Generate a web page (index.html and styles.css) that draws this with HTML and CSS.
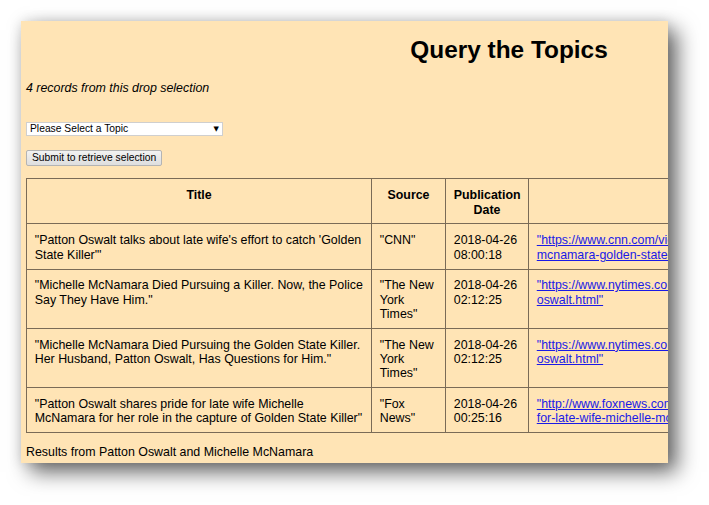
FILE: index.html
```html
<!DOCTYPE html>
<html lang="en">
<head>
<meta charset="utf-8">
<title>Query the Topics</title>
<link rel="stylesheet" href="styles.css">
</head>
<body>
<div class="shot">
  <div class="page">
    <h2 class="title">Query the Topics</h2>
    <p class="count">4 records from this drop selection</p>
    <div class="select-wrap">
      <select class="topic-select">
        <option>Please Select a Topic</option>
      </select>
      <span class="select-arrow">&#9660;</span>
    </div>
    <button class="submit" type="button">Submit to retrieve selection</button>
    <table class="results">
      <colgroup>
        <col class="c-title">
        <col class="c-source">
        <col class="c-date">
        <col class="c-url">
      </colgroup>
      <thead>
        <tr>
          <th>Title</th>
          <th>Source</th>
          <th>Publication Date</th>
          <th></th>
        </tr>
      </thead>
      <tbody>
        <tr>
          <td>"Patton Oswalt talks about late wife's effort to catch 'Golden State Killer'"</td>
          <td>"CNN"</td>
          <td>2018-04-26 08:00:18</td>
          <td><a href="#">"https://www.cnn.com/videos/entertainment/2018/04/26/patton-oswalt-michelle-<br>mcnamara-golden-state-killer-orig.cnn"</a></td>
        </tr>
        <tr>
          <td>"Michelle McNamara Died Pursuing a Killer. Now, the Police Say They Have Him."</td>
          <td>"The New York Times"</td>
          <td>2018-04-26 02:12:25</td>
          <td><a href="#">"https://www.nytimes.com/2018/04/26/us/golden-state-killer-michelle-mcnamara-patton-<br>oswalt.html"</a></td>
        </tr>
        <tr>
          <td>"Michelle McNamara Died Pursuing the Golden State Killer. Her Husband, Patton Oswalt, Has Questions for Him."</td>
          <td>"The New York Times"</td>
          <td>2018-04-26 02:12:25</td>
          <td><a href="#">"https://www.nytimes.com/2018/04/26/arts/patton-oswalt-michelle-mcnamara-patton-<br>oswalt.html"</a></td>
        </tr>
        <tr>
          <td>"Patton Oswalt shares pride for late wife Michelle McNamara for her role in the capture of Golden State Killer"</td>
          <td>"Fox News"</td>
          <td>2018-04-26 00:25:16</td>
          <td><a href="#">"http://www.foxnews.com/entertainment/2018/04/26/patton-oswalt-shares-pride-<br>for-late-wife-michelle-mcnamara.html"</a></td>
        </tr>
      </tbody>
    </table>
    <p class="footer-note">Results from Patton Oswalt and Michelle McNamara</p>
  </div>
</div>
</body>
</html>
```

FILE: styles.css
```css
html, body {
  margin: 0;
  padding: 0;
  background: #ffffff;
}

body {
  width: 709px;
  height: 505px;
  overflow: hidden;
}

.shot {
  margin: 21px 0 0 21px;
  width: 647px;
  height: 442px;
  background: #ffe4b5;
  overflow: hidden;
  box-shadow: 9px 9px 20px rgba(0, 0, 0, 0.6), 0 0 12px rgba(0, 0, 0, 0.12);
}

.page {
  width: 966px;
  padding: 0 5px;
  display: flex;
  flex-direction: column;
  align-items: flex-start;
  font-family: "Liberation Sans", Arial, sans-serif;
  font-size: 12.4px;
  color: #000;
}

.title {
  align-self: stretch;
  margin: 15px 0 0;
  text-align: center;
  font-size: 24.4px;
  font-weight: bold;
}

.count {
  margin: 16.9px 0 0;
  font-style: italic;
}

.select-wrap {
  position: relative;
  margin-top: 26.7px;
  display: flex;
}

.topic-select {
  appearance: none;
  -webkit-appearance: none;
  width: 197px;
  height: 14px;
  margin: 0;
  padding: 0 0 0 3px;
  border: 1px solid #cfcfcf;
  border-radius: 0;
  background: #ffffff;
  font-family: "Liberation Sans", Arial, sans-serif;
  font-size: 10.3px;
  line-height: 12px;
  color: #000;
  box-sizing: border-box;
}

.select-arrow {
  position: absolute;
  right: 4px;
  top: 3px;
  font-family: "DejaVu Sans", sans-serif;
  font-size: 7px;
  line-height: 8px;
  color: #000;
  pointer-events: none;
}

.submit {
  margin: 14px 0 0;
  height: 16.6px;
  padding: 0 5px;
  border: 1px solid #b4b4b4;
  border-radius: 2px;
  background: linear-gradient(#f2f2f2, #dedede);
  font-family: "Liberation Sans", Arial, sans-serif;
  font-size: 10.3px;
  line-height: 14px;
  color: #000;
  box-sizing: border-box;
}

.results {
  margin-top: 12.3px;
  width: 952px;
  table-layout: fixed;
  border-collapse: collapse;
}

.c-title { width: 345px; }
.c-source { width: 74px; }
.c-date { width: 83px; }
.c-url { width: 450px; }

.results th,
.results td {
  border: 1px solid #7a6b57;
  padding: 8.9px 7.75px 6.6px;
  vertical-align: top;
  text-align: left;
  font-size: 12.4px;
  line-height: 14.26px;
}

.results th {
  text-align: center;
  font-weight: bold;
}

.results a {
  color: #1a1ae6;
  text-decoration: underline;
  white-space: nowrap;
}

.footer-note {
  margin: 11.6px 0 0;
}
```
